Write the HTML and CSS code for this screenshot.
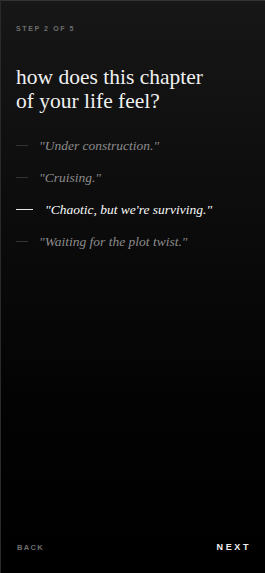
FILE: index.html
```html
<!DOCTYPE html>
<html lang="en">
<head>
  <meta charset="UTF-8">
  <title>Step 2 of 5</title>
  <link rel="stylesheet" href="styles.css">
</head>
<body>

<div class="screen">
  <div class="step">Step 2 of 5</div>
  <h1>how does this chapter<br>of your life feel?</h1>

  <div class="options" id="options">
    <div class="option"><span class="dash"></span>"Under construction."</div>
    <div class="option"><span class="dash"></span>"Cruising."</div>
    <div class="option selected"><span class="dash"></span>"Chaotic, but we're surviving."</div>
    <div class="option"><span class="dash"></span>"Waiting for the plot twist."</div>
  </div>

  <div class="nav">
    <div class="back">Back</div>
    <div class="next">Next</div>
  </div>
</div>

<script>
  const options = document.querySelectorAll(".option");
  options.forEach(opt => {
    opt.addEventListener("click", () => {
      options.forEach(o => o.classList.remove("selected"));
      opt.classList.add("selected");
    });
  });
</script>

</body>
</html>
```

FILE: styles.css
```css
* {
  box-sizing: border-box;
}

html, body {
  margin: 0;
  padding: 0;
  height: 100%;
  background: #000;
  color: #eee;
  overflow: hidden;
}

.screen {
  height: 100%;
  display: flex;
  flex-direction: column;
  padding: 23px 16px 21px 15px;
  border-top: 1px solid #333;
  border-left: 1px solid #2a2a2a;
  background: linear-gradient(to bottom, #171717 0%, #0b0b0b 40%, #030303 70%, #000 100%);
}

.step {
  font-family: 'Liberation Sans', sans-serif;
  font-size: 7px;
  font-weight: bold;
  letter-spacing: 1.6px;
  text-transform: uppercase;
  color: #6f6f6f;
  line-height: 10px;
}

h1 {
  font-family: 'Liberation Serif', serif;
  font-weight: normal;
  font-size: 21.5px;
  line-height: 24px;
  margin: 31px 0 23px 0;
  color: #f0f0f0;
}

.options {
  display: flex;
  flex-direction: column;
  gap: 13px;
}

.option {
  display: flex;
  align-items: center;
  height: 19px;
  font-family: 'Liberation Serif', serif;
  font-style: italic;
  font-size: 13.5px;
  color: #8c8c8c;
  cursor: pointer;
}

.option .dash {
  width: 12px;
  height: 1px;
  background: #333;
  margin-right: 11px;
  flex-shrink: 0;
}

.option.selected {
  color: #fafafa;
}

.option.selected .dash {
  width: 17px;
  background: #e8e8e8;
  margin-right: 12px;
}

.nav {
  margin-top: auto;
  display: flex;
  justify-content: space-between;
  align-items: center;
  font-family: 'Liberation Sans', sans-serif;
  text-transform: uppercase;
}

.back {
  font-size: 7.5px;
  font-weight: bold;
  letter-spacing: 1.3px;
  color: #6f6f6f;
  margin-left: 1px;
}

.next {
  font-size: 9px;
  font-weight: bold;
  letter-spacing: 2.6px;
  color: #f2f2f2;
  margin-right: -2px;
}
```
